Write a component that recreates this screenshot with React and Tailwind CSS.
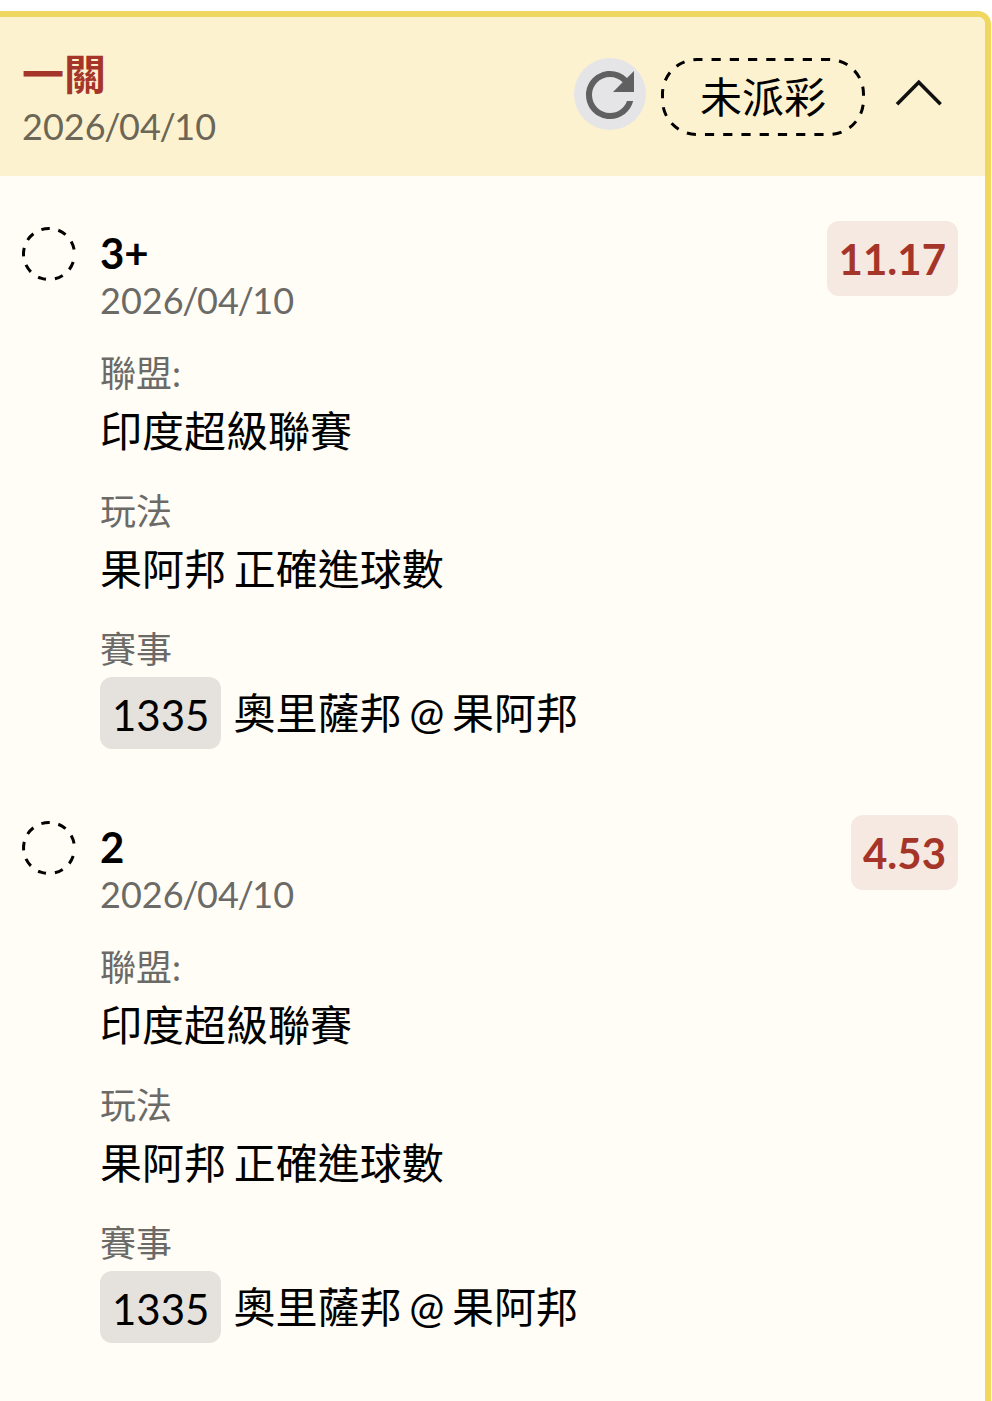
import { MdRefresh } from "react-icons/md";

const legs = [
  { pick: "3+", odds: "11.17" },
  { pick: "2", odds: "4.53" },
];

function PendingCircle() {
  return (
    <svg className="mt-[50px] h-[56px] w-[56px] shrink-0" viewBox="0 0 56 56" fill="none">
      <circle
        cx="28"
        cy="28"
        r="25.5"
        stroke="#000"
        strokeWidth="3"
        pathLength="360"
        strokeDasharray="19 20 19 20 19 20 19 20 19 20 19 20 19 20 19 20 19 29"
        transform="rotate(18.5 28 28)"
      />
    </svg>
  );
}

function DateText() {
  return (
    <>
      2026<span className="-mx-[1.4px]">/</span>04<span className="-mx-[1.4px]">/</span>10
    </>
  );
}

function Label({ children }) {
  return <div className="h-[54px] text-[36px] leading-[54px] text-[#6b6a67]">{children}</div>;
}

function Leg({ pick, odds }) {
  return (
    <section className="flex h-[594px] items-start pl-[21px] pr-[27px]">
      <PendingCircle />
      <div className="ml-[23px] flex-1 pt-[50px]">
        <div className="h-[50px] text-[42px] font-bold leading-[54px]">{pick}</div>
        <div className="h-[50px] text-[36px] leading-[48px] text-[#6b6a67]">
          <DateText />
        </div>
        <div className="mt-[20px]">
          <Label>聯盟:</Label>
          <div className="h-[63px] text-[42px] leading-[63px]">印度超級聯賽</div>
        </div>
        <div className="mt-[21px]">
          <Label>玩法</Label>
          <div className="h-[63px] text-[42px] leading-[63px] [word-spacing:-3px]">果阿邦 正確進球數</div>
        </div>
        <div className="mt-[21px]">
          <Label>賽事</Label>
          <div className="flex items-start text-[42px]">
            <span className="mt-[1px] h-[72px] rounded-[12px] bg-[#e5e2dd] px-[12px] leading-[76px]">1335</span>
            <span className="ml-[12px] leading-[74px] [word-spacing:-3px]">奧里薩邦 @ 果阿邦</span>
          </div>
        </div>
      </div>
      <div className="mt-[45px] h-[75px] rounded-[12px] bg-[#f5e9e2] px-[12px] text-[42px] font-bold leading-[76px] text-[#a63529]">
        {odds}
      </div>
    </section>
  );
}

export default function App() {
  return (
    <div className="h-[1401px] w-[992px] overflow-hidden bg-white pr-[1px] pt-[11px] font-['Lato','Noto_Sans_CJK_TC',sans-serif] text-black">
      <main className="h-[1420px] overflow-hidden rounded-tr-[13px] border-r-[6px] border-t-[6px] border-[#f0d860] bg-[#fffdf6]">
        <header className="flex h-[159px] items-start bg-[#fdf2cf] pl-[22px]">
          <div className="flex-1 pt-[30px]">
            <div className="h-[55px] text-[42px] font-semibold leading-[55px] text-[#a63529]">一關</div>
            <div className="h-[50px] text-[36px] leading-[48px] text-[#6b6656]">
              <DateText />
            </div>
          </div>
          <button className="mt-[41px] h-[72px] w-[72px] rounded-full bg-[#e5e5e8] pt-px">
            <MdRefresh className="h-[72px] w-[72px] text-[#606060]" />
          </button>
          <div className="relative ml-[15px] mt-[41px] h-[78px] w-[204px] text-center text-[42px] leading-[78px]">
            <svg className="absolute inset-0" width="204" height="78" fill="none">
              <rect
                x="1.5"
                y="1.5"
                width="201"
                height="75"
                rx="34.5"
                stroke="#000"
                strokeWidth="3"
                pathLength="493"
                strokeDasharray="9.2 9.06"
                strokeDashoffset="3.7"
              />
            </svg>
            未派彩
          </div>
          <svg
            className="ml-[30px] mr-[42px] mt-[61px]"
            width="48"
            height="30"
            viewBox="0 0 48 30"
            fill="none"
            stroke="#111"
            strokeWidth="3.6"
          >
            <path d="M2 26.2 23.8 4.2 45.6 26.2" />
          </svg>
        </header>
        {legs.map((leg) => (
          <Leg key={leg.pick} {...leg} />
        ))}
      </main>
    </div>
  );
}
